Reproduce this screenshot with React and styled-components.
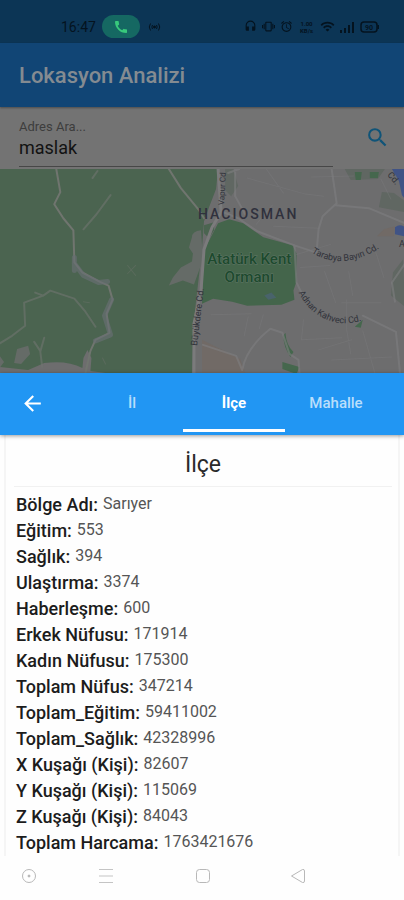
import React, { useState } from "react";
import styled, { createGlobalStyle } from "styled-components";
import {
  MdArrowBack,
  MdCall,
  MdSearch,
  MdHeadset,
  MdVibration,
  MdAlarm,
  MdWifi,
} from "react-icons/md";

const GlobalStyle = createGlobalStyle`
  *, *::before, *::after { box-sizing: border-box; }
  body {
    margin: 0;
    background: #fefefe;
    font-family: Roboto, "Noto Sans", sans-serif;
  }
  button, input { font-family: inherit; }
`;

const Screen = styled.div`
  display: flex;
  flex-direction: column;
  min-height: 100vh;
  background: #fefefe;
`;

const StatusBar = styled.div`
  display: flex;
  align-items: center;
  height: 43px;
  padding: 10px 25px 0 61px;
  background: #0c3555;
  color: #04131f;
  font-size: 14px;
`;

const CallPill = styled.span`
  display: flex;
  align-items: center;
  justify-content: center;
  width: 38px;
  height: 23px;
  margin: 0 8px 0 6px;
  border-radius: 12px;
  background: #156862;
  color: #38c97c;
`;

const StatusIcons = styled.div`
  display: flex;
  align-items: center;
  gap: 5px;
  margin-left: auto;
`;

const NetSpeed = styled.span`
  display: flex;
  flex-direction: column;
  align-items: center;
  width: 17px;
  font-size: 6px;
  font-weight: 700;
  line-height: 7px;
`;

const AppBar = styled.header`
  display: flex;
  align-items: center;
  height: 64px;
  padding: 2px 19px 0;
  background: #114575;
  box-shadow: 0 1px 2px rgba(0, 0, 0, 0.35);
  z-index: 1;
`;

const AppTitle = styled.h1`
  margin: 0;
  color: #848b91;
  font-size: 22px;
  font-weight: 500;
  line-height: 28px;
`;

const SearchForm = styled.form`
  display: flex;
  align-items: flex-start;
  height: 62px;
  padding: 12px 14px 0 19px;
  background: #737373;
`;

const Field = styled.label`
  display: flex;
  flex: 1;
  flex-direction: column;
  height: 48px;
  margin-right: 32px;
  border-bottom: 1px solid #474747;
  color: #3d3d3d;
  font-size: 13px;
  line-height: 16px;
`;

const FieldInput = styled.input`
  width: 100%;
  height: 24px;
  padding: 0;
  border: 0;
  outline: 0;
  background: transparent;
  color: #121212;
  font-size: 18px;
`;

const IconButton = styled.button`
  display: flex;
  align-items: center;
  justify-content: center;
  width: 25px;
  height: 36px;
  padding: 0;
  border: 0;
  background: transparent;
  color: ${(p) => p.$color};
`;

const MapArt = styled.svg`
  display: block;
  width: 100%;
  height: 204px;
  background: #6d6d6e;
`;

const TabBar = styled.nav`
  display: flex;
  align-items: stretch;
  height: 62px;
  padding: 0 17px 3px 20px;
  background: #2196f3;
  box-shadow: 0 1px 4px rgba(0, 0, 0, 0.4);
  z-index: 1;
`;

const BackSlot = styled.div`
  display: flex;
  align-items: center;
  width: 61px;
  padding-top: 2px;
`;

const TabList = styled.div`
  display: flex;
  flex: 1;
`;

const Tab = styled.button`
  flex: 1;
  padding: 3px 0 0;
  border: 0;
  border-bottom: 3px solid ${(p) => (p.$active ? "#ffffff" : "transparent")};
  background: transparent;
  color: ${(p) => (p.$active ? "#ffffff" : "#b9defb")};
  font-size: 15px;
  font-weight: ${(p) => (p.$active ? 700 : 500)};
`;

const Card = styled.main`
  flex: 1;
  margin: 0 4px;
  padding: 14px 6px 0 8px;
  border: solid #f5f5f5;
  border-width: 0 2px;
`;

const CardTitle = styled.h2`
  margin: 0 0 5px;
  padding-bottom: 5px;
  border-bottom: 1px solid #f1f1f1;
  color: #2a2a2a;
  font-size: 23px;
  font-weight: 400;
  line-height: 32px;
  text-align: center;
`;

const Facts = styled.dl`
  margin: 0;
  padding-left: 2px;
`;

const Fact = styled.div`
  display: flex;
  gap: 5px;
  height: 26px;
`;

const FactName = styled.dt`
  color: #1c1c1c;
  font-size: 18px;
  font-weight: 500;
  line-height: 26px;
`;

const FactValue = styled.dd`
  margin: 0;
  color: #555555;
  font-size: 16px;
  line-height: 24px;
`;

const SystemNav = styled.footer`
  display: grid;
  grid-template-columns: 77fr 97fr 95fr 106fr;
  align-items: center;
  height: 44px;
  padding: 0 8px 4px 21px;
  background: #fefefe;
`;

const NavButton = styled.button`
  display: flex;
  padding: 0;
  border: 0;
  background: transparent;
`;

const facts = [
  ["Bölge Adı:", "Sarıyer"],
  ["Eğitim:", "553"],
  ["Sağlık:", "394"],
  ["Ulaştırma:", "3374"],
  ["Haberleşme:", "600"],
  ["Erkek Nüfusu:", "171914"],
  ["Kadın Nüfusu:", "175300"],
  ["Toplam Nüfus:", "347214"],
  ["Toplam_Eğitim:", "59411002"],
  ["Toplam_Sağlık:", "42328996"],
  ["X Kuşağı (Kişi):", "82607"],
  ["Y Kuşağı (Kişi):", "115069"],
  ["Z Kuşağı (Kişi):", "84043"],
  ["Toplam Harcama:", "1763421676"],
];

function Hotspot() {
  return (
    <svg width="13" height="12" viewBox="0 0 13 12" fill="none" stroke="currentColor">
      <path d="M2.5 2.5Q0 6 2.5 9.5M10.500 2.5Q13 6 10.500 9.5M4.500 4Q3.200 6 4.500 8M8.500 4Q9.800 6 8.500 8" />
      <circle cx="6.500" cy="6" r="1" fill="currentColor" />
    </svg>
  );
}

function Signal() {
  return (
    <svg width="15" height="12" viewBox="0 0 15 12" fill="currentColor">
      <path d="M0 9h2v3H0zM4 7h2v5H4zM8 4h2v8H8zM12 1h2v11h-2z" />
    </svg>
  );
}

function Battery() {
  return (
    <svg width="19" height="12" viewBox="0 0 19 12" fill="none" stroke="currentColor" strokeWidth="1.500">
      <rect x="1" y="1" width="16" height="10" rx="3" />
      <path d="M18.200 4v4" />
      <text x="9" y="8.500" textAnchor="middle" fontSize="7" fontWeight="700" fill="currentColor" stroke="none">90</text>
    </svg>
  );
}

function LocationMap() {
  return (
    <MapArt viewBox="0 0 404 203" preserveAspectRatio="xMidYMid slice" role="img" aria-label="Sarıyer haritası">
      <defs>
        <path id="tarabya" d="M311 83Q328 94 348 91T388 72" />
        <path id="adnan" d="M298 123Q309 144 329 151T372 146" />
        <path id="buyukdere" d="M197 176L205 110" />
        <path id="vapur" d="M224 36L226 -4" />
      </defs>
      <rect width="404" height="203" fill="#6d6d6e" />
      <path d="M0 0H218L216 20 209 38 204 52 202 80 194 150 192 203H106L91 201 92 188 88 180 84 188 83 198Q68 190 45 193L29 200 0 197Z" fill="#4b6450" />
      <path d="M201 61Q192 62 192 68L189 78 193 84 192 92 181 98 173 108 169 116 183 111 194 115 203 90Z" fill="#656b67" />
      <path d="M0 185L5 192 0 199ZM18 179L29 176 31 184 22 194 15 193Z" fill="#656b67" />
      <path d="M204 56L214 53 214 61 209 69 204 64Z" fill="#4b6450" />
      <path d="M204 81L218 54 229 50 243 54 263 68 292 76 296 84 296 112 293 121 294 130 281 135 247 136 232 132 213 129 202 134Z" fill="#44654b" />
      <path d="M264 126L271 123 276 128 268 130Z" fill="#49636b" />
      <path d="M225 0H233L238 17 231 27 225 21ZM381 23L393 24 404 32V43L378 38ZM402 90L392 103 390 126 404 137ZM344 0H384L377 10 350 11Z" fill="#606762" />
      <path d="M354 3h7l-1 8h-5ZM369 3h9l-1 6h-8ZM282 192L299 197 296 204 282 199ZM285 163Q286 176 293 182L290 187Q283 177 283 166ZM354 157L362 150 360 158Z" fill="#45674d" />
      <path d="M391 0H404V30L401 26 398 12ZM394 58Q399 54 404 58V67L394 65Z" fill="#405385" />
      <path d="M383 60L394 57 393 67 376 67ZM202 170L240 189 245 203H202Z" fill="#716a66" />
      <g fill="none" stroke="#70756f" strokeLinecap="round" strokeLinejoin="round">
        <path d="M57 0L61 23 55 35 64 49 74 61 75 93 83 103 100 112 109 116 113 130 107 144 110 163 96 170 91 181 86 203" strokeWidth="2" />
        <path d="M75 94L84 106 99 113 108 112M112 130L105 146 111 165 96 171M75 88V101" stroke="#696f73" strokeWidth="5" opacity=".65" />
        <path d="M0 174L13 166 26 156 25 133 44 126 51 121 75 129 86 142 96 157M36 123L44 126M111 26L97 45 84 60M98 2L93 9M35 172L41 181 43 197M45 168L41 182" strokeWidth="2" opacity=".6" />
        <path d="M169 0L181 19 199 41 204 49" strokeWidth="2" />
        <path d="M218 0L221 43 212 58 204 80 201 121 194 154 194 203" stroke="#7b7b7c" strokeWidth="3" />
        <path d="M221 42L238 49 257 62 294 76 315 83M294 76L296 113 303 127M228 4L239 0M235 0V27L245 45M331 0L336 34 322 47 318 60 316 83M203 175L236 186 242 200 Q246 178 270 159L282 163 289 184 298 190 299 203M335 36L368 39 404 54M362 146L395 162 399 203M404 94L391 113 394 132" stroke="#7e7f80" strokeWidth="2" opacity=".6" />
        <path d="M266 0L283 24M311 8L353 7M247 9L305 25 323 27M256 55L272 36M273 57L318 59M300 98L329 96M324 102L335 133M341 133L380 133M318 180L351 170M248 147L244 166M362 161L374 203M331 190L391 187M380 10L390 30M303 150L301 170 341 168M346 130V160L350 184M296 85L330 75M348 102L352 126M263 145L259 159M211 145L251 144M375 83L383 108" stroke="#7e7f80" strokeWidth="1" opacity=".35" />
        <path d="M128 104L136 96M128 96L136 106M103 188L106 194M84 132L90 133" strokeWidth="1" opacity=".4" />
      </g>
      <g fill="#30323a" fontFamily="Roboto, sans-serif" fontSize="9">
        <text><textPath href="#tarabya">Tarabya Bayırı Cd.</textPath></text>
        <text><textPath href="#adnan">Adnan Kahveci Cd.</textPath></text>
        <text><textPath href="#buyukdere">Büyükdere Cd.</textPath></text>
        <text fontSize="8"><textPath href="#vapur">Vapur Cd</textPath></text>
        <text x="386" y="6" transform="rotate(50 386 6)">Cd.</text>
        <text x="398" y="78">A</text>
      </g>
      <text x="198" y="50" fill="#30313d" fontFamily="Roboto, sans-serif" fontSize="14" fontWeight="500" letterSpacing="2">HACIOSMAN</text>
      <g fill="#1d4a2e" stroke="#607667" strokeWidth="1" paintOrder="stroke" fontFamily="Roboto, sans-serif" fontSize="15" fontWeight="500" textAnchor="middle">
        <text x="249" y="95">Atatürk Kent</text>
        <text x="249" y="112">Ormanı</text>
      </g>
    </MapArt>
  );
}

export default function App() {
  const [query, setQuery] = useState("maslak");
  const [active, setActive] = useState("İlçe");

  return (
    <>
      <GlobalStyle />
      <Screen>
        <StatusBar>
          <span>16:47</span>
          <CallPill><MdCall size={16} /></CallPill>
          <Hotspot />
          <StatusIcons>
            <MdHeadset size={13} />
            <MdVibration size={13} />
            <MdAlarm size={13} />
            <NetSpeed><span>1.00</span><span>KB/s</span></NetSpeed>
            <MdWifi size={15} />
            <Signal />
            <Battery />
          </StatusIcons>
        </StatusBar>
        <AppBar>
          <AppTitle>Lokasyon Analizi</AppTitle>
        </AppBar>
        <SearchForm onSubmit={(e) => e.preventDefault()}>
          <Field>
            Adres Ara...
            <FieldInput value={query} onChange={(e) => setQuery(e.target.value)} />
          </Field>
          <IconButton type="submit" aria-label="Ara" $color="#105478">
            <MdSearch size={25} />
          </IconButton>
        </SearchForm>
        <LocationMap />
        <TabBar>
          <BackSlot>
            <IconButton type="button" aria-label="Geri" $color="#ffffff">
              <MdArrowBack size={25} />
            </IconButton>
          </BackSlot>
          <TabList role="tablist">
            {["İl", "İlçe", "Mahalle"].map((name) => (
              <Tab
                key={name}
                type="button"
                role="tab"
                aria-selected={name === active}
                $active={name === active}
                onClick={() => setActive(name)}
              >
                {name}
              </Tab>
            ))}
          </TabList>
        </TabBar>
        <Card>
          <CardTitle>İlçe</CardTitle>
          <Facts>
            {facts.map(([name, value]) => (
              <Fact key={name}>
                <FactName>{name}</FactName>
                <FactValue>{value}</FactValue>
              </Fact>
            ))}
          </Facts>
        </Card>
        <SystemNav>
          <NavButton type="button" aria-label="Yardımcı">
            <svg width="16" height="16" viewBox="0 0 16 16" fill="none" stroke="#b8b8b8">
              <circle cx="8" cy="8" r="6.500" />
              <circle cx="8" cy="8" r="1" fill="#aaaaaa" />
            </svg>
          </NavButton>
          <NavButton type="button" aria-label="Menü">
            <svg width="16" height="16" viewBox="0 0 16 16" fill="none" stroke="#c4c4c4">
              <path d="M1 1.500h14M1 8h14M1 14.500h14" />
            </svg>
          </NavButton>
          <NavButton type="button" aria-label="Ana ekran">
            <svg width="16" height="16" viewBox="0 0 16 16" fill="none" stroke="#b8b8b8">
              <rect x="1.500" y="1.500" width="13" height="13" rx="3" />
            </svg>
          </NavButton>
          <NavButton type="button" aria-label="Geri dön">
            <svg width="16" height="16" viewBox="0 0 16 16" fill="none" stroke="#b8b8b8" strokeLinejoin="round">
              <path d="M1.500 8L12.500 1.500Q14.500 1 14.500 3V13Q14.500 15 12.500 14.500Z" />
            </svg>
          </NavButton>
        </SystemNav>
      </Screen>
    </>
  );
}
